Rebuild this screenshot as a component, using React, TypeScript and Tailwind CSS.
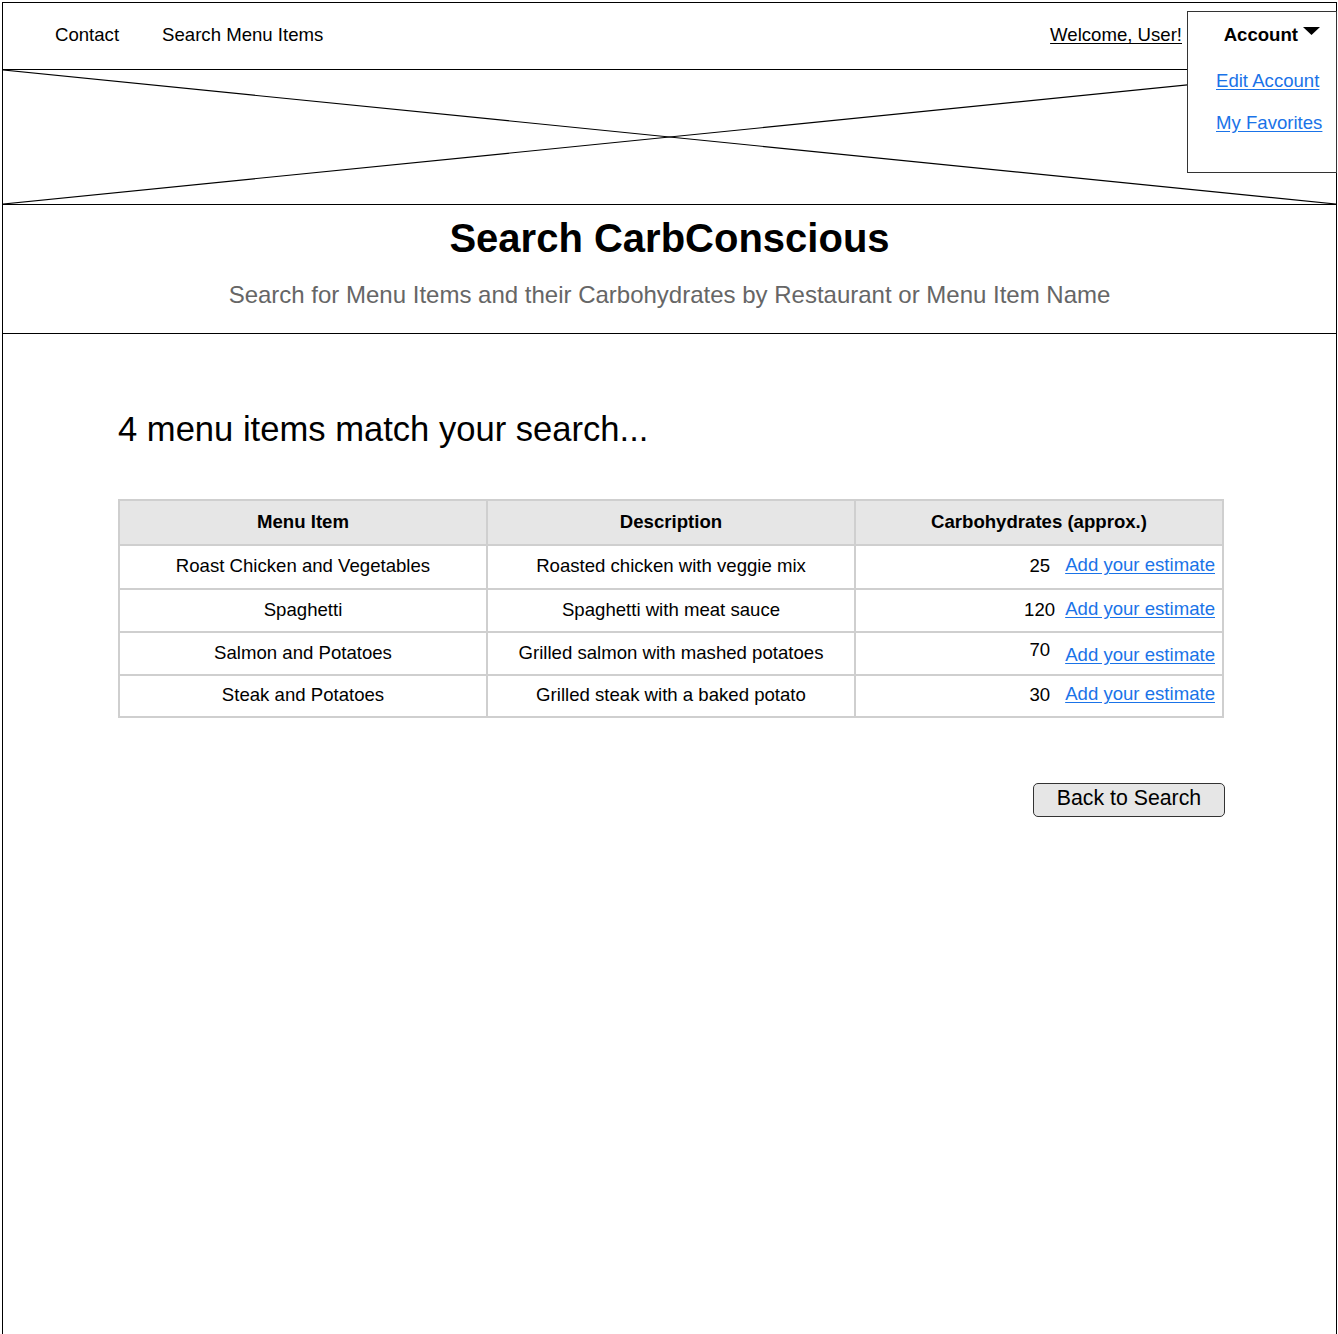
import React from "react";

const rows = [
  { item: "Roast Chicken and Vegetables", desc: "Roasted chicken with veggie mix", carbs: "25", numCls: "mr-[15px]", linkCls: "" },
  { item: "Spaghetti", desc: "Spaghetti with meat sauce", carbs: "120", numCls: "mr-[10px]", linkCls: "" },
  { item: "Salmon and Potatoes", desc: "Grilled salmon with mashed potatoes", carbs: "70", numCls: "mr-[15px] -translate-y-[3px]", linkCls: "translate-y-[2px]" },
  { item: "Steak and Potatoes", desc: "Grilled steak with a baked potato", carbs: "30", numCls: "mr-[15px]", linkCls: "" },
];

const rowHeights = ["h-[44px]", "h-[43px]", "h-[43px]", "h-[42px]"];

export default function App() {
  return (
    <div className="relative w-[1338px] h-[1334px] overflow-hidden bg-white text-black" style={{ fontFamily: '"Liberation Sans", Arial, sans-serif' }}>
      <div className="ml-[2px] mt-[2px] w-[1335px] h-[1340px] border border-black border-b-0 flex flex-col">
        {/* Nav */}
        <div className="h-[67px] border-b border-black flex items-center text-[18.6px] shrink-0">
          <span className="ml-[52px] -translate-y-[1px]">Contact</span>
          <span className="ml-[43px] -translate-y-[1px]">Search Menu Items</span>
          <span className="ml-auto mr-[154px] underline underline-offset-2 -translate-y-[1px]">Welcome, User!</span>
        </div>
        {/* Hero image placeholder */}
        <div className="h-[135px] border-b border-black shrink-0">
          <svg width="100%" height="100%" viewBox="0 0 1333 134" preserveAspectRatio="none">
            <line x1="0" y1="0" x2="1333" y2="134" stroke="black" strokeWidth="1.2" />
            <line x1="0" y1="134" x2="1333" y2="0" stroke="black" strokeWidth="1.2" />
          </svg>
        </div>
        {/* Header */}
        <div className="h-[129px] border-b border-black flex flex-col items-center shrink-0">
          <h1 className="mt-[10px] text-[40px] leading-[46px] font-bold">Search CarbConscious</h1>
          <p className="mt-[20px] text-[24px] leading-[28px] text-[#666666]">
            Search for Menu Items and their Carbohydrates by Restaurant or Menu Item Name
          </p>
        </div>
        {/* Main */}
        <div className="pl-[115px] pr-[111px] flex flex-col">
          <h2 className="mt-[75px] text-[34.6px] leading-[40px]">4 menu items match your search...</h2>
          <table className="mt-[50px] w-[1106px] border-collapse text-[18.6px] table-fixed">
            <thead>
              <tr className="h-[45px] bg-[#e6e6e6]">
                <th className="border-2 border-[#cfcfcf] font-bold w-[368px] pb-[2px]">Menu Item</th>
                <th className="border-2 border-[#cfcfcf] font-bold w-[368px] pb-[2px]">Description</th>
                <th className="border-2 border-[#cfcfcf] font-bold pb-[2px]">Carbohydrates (approx.)</th>
              </tr>
            </thead>
            <tbody>
              {rows.map((r, i) => (
                <tr key={r.item} className={rowHeights[i]}>
                  <td className="border-2 border-[#cfcfcf] text-center pb-[2px]">{r.item}</td>
                  <td className="border-2 border-[#cfcfcf] text-center pb-[2px]">{r.desc}</td>
                  <td className="border-2 border-[#cfcfcf] pb-[2px]">
                    <div className="flex items-center justify-end pr-[7px]">
                      <span className={r.numCls}>{r.carbs}</span>
                      <a href="#" className={"text-[#1a73e8] underline underline-offset-2 -translate-y-[1px] " + r.linkCls}>
                        Add your estimate
                      </a>
                    </div>
                  </td>
                </tr>
              ))}
            </tbody>
          </table>
          <div className="flex justify-end mt-[65px]">
            <button className="w-[192px] h-[34px] rounded-[5px] border border-[#333333] bg-[#e6e6e6] text-[21.3px] leading-[24px] pb-[4px]">
              Back to Search
            </button>
          </div>
        </div>
      </div>
      {/* Account dropdown */}
      <div className="absolute left-[1187px] top-[11px] w-[150px] h-[162px] border border-[#333333] bg-white text-[18.6px]">
        <div className="flex items-center justify-end pr-[16px] mt-[12px] h-[22px]">
          <span className="font-bold">Account</span>
          <svg width="17" height="9" viewBox="0 0 17 9" className="ml-[5px] -translate-y-[4px]">
            <polygon points="0,0 17,0 8.5,8" fill="black" />
          </svg>
        </div>
        <div className="pl-[28px] mt-[24px] flex flex-col gap-[20px]">
          <a href="#" className="text-[#1a73e8] underline underline-offset-2 leading-[22px]">Edit Account</a>
          <a href="#" className="text-[#1a73e8] underline underline-offset-2 leading-[22px]">My Favorites</a>
        </div>
      </div>
    </div>
  );
}
